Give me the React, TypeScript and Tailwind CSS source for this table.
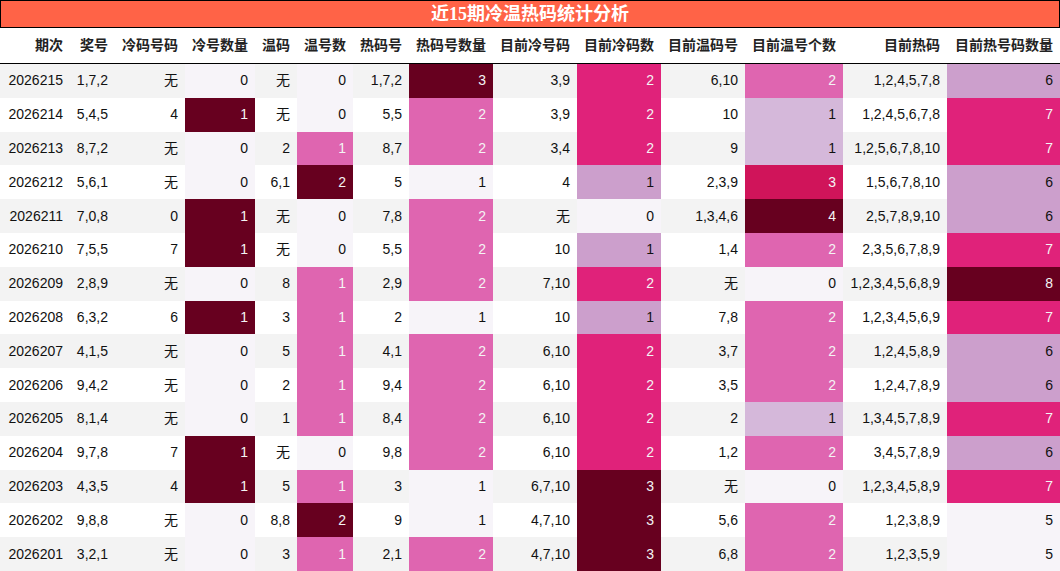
import React from "react";

type Row = (string | number)[];

const headers = [
  "期次",
  "奖号",
  "冷码号码",
  "冷号数量",
  "温码",
  "温号数",
  "热码号",
  "热码号数量",
  "目前冷号码",
  "目前冷码数",
  "目前温码号",
  "目前温号个数",
  "目前热码",
  "目前热号码数量",
];

const rows: Row[] = [
  ["2026215", "1,7,2", "无", 0, "无", 0, "1,7,2", 3, "3,9", 2, "6,10", 2, "1,2,4,5,7,8", 6],
  ["2026214", "5,4,5", "4", 1, "无", 0, "5,5", 2, "3,9", 2, "10", 1, "1,2,4,5,6,7,8", 7],
  ["2026213", "8,7,2", "无", 0, "2", 1, "8,7", 2, "3,4", 2, "9", 1, "1,2,5,6,7,8,10", 7],
  ["2026212", "5,6,1", "无", 0, "6,1", 2, "5", 1, "4", 1, "2,3,9", 3, "1,5,6,7,8,10", 6],
  ["2026211", "7,0,8", "0", 1, "无", 0, "7,8", 2, "无", 0, "1,3,4,6", 4, "2,5,7,8,9,10", 6],
  ["2026210", "7,5,5", "7", 1, "无", 0, "5,5", 2, "10", 1, "1,4", 2, "2,3,5,6,7,8,9", 7],
  ["2026209", "2,8,9", "无", 0, "8", 1, "2,9", 2, "7,10", 2, "无", 0, "1,2,3,4,5,6,8,9", 8],
  ["2026208", "6,3,2", "6", 1, "3", 1, "2", 1, "10", 1, "7,8", 2, "1,2,3,4,5,6,9", 7],
  ["2026207", "4,1,5", "无", 0, "5", 1, "4,1", 2, "6,10", 2, "3,7", 2, "1,2,4,5,8,9", 6],
  ["2026206", "9,4,2", "无", 0, "2", 1, "9,4", 2, "6,10", 2, "3,5", 2, "1,2,4,7,8,9", 6],
  ["2026205", "8,1,4", "无", 0, "1", 1, "8,4", 2, "6,10", 2, "2", 1, "1,3,4,5,7,8,9", 7],
  ["2026204", "9,7,8", "7", 1, "无", 0, "9,8", 2, "6,10", 2, "1,2", 2, "3,4,5,7,8,9", 6],
  ["2026203", "4,3,5", "4", 1, "5", 1, "3", 1, "6,7,10", 3, "无", 0, "1,2,3,4,5,8,9", 7],
  ["2026202", "9,8,8", "无", 0, "8,8", 2, "9", 1, "4,7,10", 3, "5,6", 2, "1,2,3,8,9", 5],
  ["2026201", "3,2,1", "无", 0, "3", 1, "2,1", 2, "4,7,10", 3, "6,8", 2, "1,2,3,5,9", 5],
];

// PuRd gradient steps, written out in full so Tailwind picks them up
const MIN = "bg-[#f7f4f9] text-[#111]";
const Q25 = "bg-[#d5b8da] text-[#111]";
const Q33 = "bg-[#cc9fcc] text-[#111]";
const Q50 = "bg-[#df65b0] text-[#f4f4f4]";
const Q67 = "bg-[#e0227a] text-[#f4f4f4]";
const Q75 = "bg-[#d0145a] text-[#f4f4f4]";
const MAX = "bg-[#67001f] text-[#f4f4f4]";

// column index -> value -> style
const gradients: { [col: number]: { [v: number]: string } } = {
  3: { 0: MIN, 1: MAX },
  5: { 0: MIN, 1: Q50, 2: MAX },
  7: { 1: MIN, 2: Q50, 3: MAX },
  9: { 0: MIN, 1: Q33, 2: Q67, 3: MAX },
  11: { 0: MIN, 1: Q25, 2: Q50, 3: Q75, 4: MAX },
  13: { 5: MIN, 6: Q33, 7: Q67, 8: MAX },
};

const gridCols =
  "grid grid-cols-[70px_45px_70px_70px_42px_56px_56px_84px_84px_84px_84px_98px_104px_113px]";

export default function App() {
  return (
    <div
      className="w-[1060px] h-[571px] overflow-hidden bg-white"
      style={{ fontFamily: '"Liberation Sans", "Noto Sans CJK SC", sans-serif' }}
    >
      <div
        className="h-[28px] border border-black bg-[#ff6347] flex items-center justify-center text-white font-bold text-[18px] leading-none"
        style={{ fontFamily: '"Liberation Serif", "Noto Sans CJK SC", serif' }}
      >
        近15期冷温热码统计分析
      </div>

      {/* header */}
      <div className={`${gridCols} h-[36px] border-b border-black`}>
        {headers.map((h) => (
          <div
            key={h}
            className="flex items-center justify-end pr-[7px] text-[14px] font-bold text-[#222]"
          >
            {h}
          </div>
        ))}
      </div>

      {/* body */}
      {rows.map((row, ri) => (
        <div
          key={ri}
          className={`${gridCols} h-[33.8px] ${ri % 2 === 0 ? "bg-[#f3f3f3]" : "bg-white"}`}
        >
          {row.map((cell, ci) => {
            const g = gradients[ci];
            const style = g ? g[cell as number] : "text-[#111]";
            return (
              <div
                key={ci}
                className={`flex items-center justify-end pr-[7px] text-[14px] ${style}`}
              >
                {cell}
              </div>
            );
          })}
        </div>
      ))}
    </div>
  );
}
